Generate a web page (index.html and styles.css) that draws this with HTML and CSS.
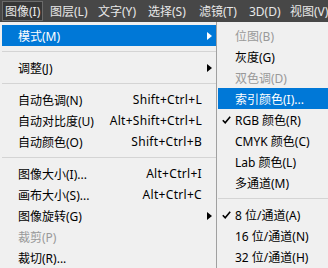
FILE: index.html
```html
<!DOCTYPE html>
<html lang="zh-CN">
<head>
  <meta charset="UTF-8">
  <title>图像菜单</title>
  <link rel="stylesheet" href="styles.css">
</head>
<body>
  <div class="bar">
    <span class="tab active">图像(I)</span>
    <span class="tab">图层(L)</span>
    <span class="tab">文字(Y)</span>
    <span class="tab">选择(S)</span>
    <span class="tab">滤镜(T)</span>
    <span class="tab">3D(D)</span>
    <span class="tab">视图(V)</span>
  </div>

  <div class="menus">
    <ul class="menu">
      <li class="item hot"><span class="label">模式(M)</span><span class="more"><i class="arrow"></i></span></li>
      <li class="sep"></li>
      <li class="item"><span class="label">调整(J)</span><span class="more"><i class="arrow"></i></span></li>
      <li class="sep"></li>
      <li class="item"><span class="label">自动色调(N)</span><span class="key">Shift+Ctrl+L</span><span class="more"></span></li>
      <li class="item"><span class="label">自动对比度(U)</span><span class="key">Alt+Shift+Ctrl+L</span><span class="more"></span></li>
      <li class="item"><span class="label">自动颜色(O)</span><span class="key">Shift+Ctrl+B</span><span class="more"></span></li>
      <li class="sep"></li>
      <li class="item"><span class="label">图像大小(I)...</span><span class="key">Alt+Ctrl+I</span><span class="more"></span></li>
      <li class="item"><span class="label">画布大小(S)...</span><span class="key">Alt+Ctrl+C</span><span class="more"></span></li>
      <li class="item"><span class="label">图像旋转(G)</span><span class="more"><i class="arrow"></i></span></li>
      <li class="item off"><span class="label">裁剪(P)</span><span class="more"></span></li>
      <li class="item"><span class="label">裁切(R)...</span><span class="more"></span></li>
    </ul>

    <ul class="menu sub">
      <li class="item off"><span class="mark"></span><span class="label">位图(B)</span></li>
      <li class="item"><span class="mark"></span><span class="label">灰度(G)</span></li>
      <li class="item off"><span class="mark"></span><span class="label">双色调(D)</span></li>
      <li class="item hot"><span class="mark"></span><span class="label">索引颜色(I)...</span></li>
      <li class="item"><span class="mark"><svg class="check" viewBox="0 0 9 8"><path d="M0.8 4.2 L3.2 6.8 L8.2 0.8" /></svg></span><span class="label">RGB 颜色(R)</span></li>
      <li class="item"><span class="mark"></span><span class="label">CMYK 颜色(C)</span></li>
      <li class="item"><span class="mark"></span><span class="label">Lab 颜色(L)</span></li>
      <li class="item"><span class="mark"></span><span class="label">多通道(M)</span></li>
      <li class="sep"></li>
      <li class="item"><span class="mark"><svg class="check" viewBox="0 0 9 8"><path d="M0.8 4.2 L3.2 6.8 L8.2 0.8" /></svg></span><span class="label">8 位/通道(A)</span></li>
      <li class="item"><span class="mark"></span><span class="label">16 位/通道(N)</span></li>
      <li class="item"><span class="mark"></span><span class="label">32 位/通道(H)</span></li>
    </ul>
  </div>
</body>
</html>
```

FILE: styles.css
```css
body {
  margin: 0;
  background: #f0f0f0;
  font-family: "Noto Sans", "Noto Sans CJK SC", sans-serif;
  font-size: 12px;
  color: #000;
  overflow: hidden;
}

/* top menu bar: columns follow the spacing of the Photoshop bar */
.bar {
  display: grid;
  grid-template-columns: 45px 48px 50px 51px 50px 41px 1fr;
  align-items: center;
  height: 22px;
  padding-left: 2px;
  background: #474747;
  color: #e8e8e8;
  white-space: nowrap;
  overflow: hidden;
}

.tab {
  display: flex;
  align-items: center;
  justify-self: start;
  height: 18px;
  padding: 0 2px;
  border: 1px solid transparent;
}

.tab.active {
  background: #363636;
  border-color: #6a6a6a;
}

.menus {
  display: flex;
}

.menu {
  list-style: none;
  margin: 0;
  padding: 3px 0 0 2px;
  width: 214px;
  background: #f0f0f0;
}

.sub {
  flex: 1;
  width: auto;
  border-left: 1px solid #a0a0a0;
  padding-left: 1px;
}

.item {
  display: flex;
  align-items: center;
  height: 21px;
  padding-left: 16px;
  white-space: nowrap;
}

.item.hot {
  background: #0078d7;
  color: #fff;
}

.item.off {
  color: #999;
}

.key {
  margin-left: auto;
  letter-spacing: 0.3px;
}

.more {
  display: flex;
  align-items: center;
  justify-content: center;
  width: 14px;
  margin-left: auto;
  flex-shrink: 0;
}

.key + .more {
  margin-left: 0;
}

.arrow {
  width: 0;
  height: 0;
  border-left: 5px solid #000;
  border-top: 4px solid transparent;
  border-bottom: 4px solid transparent;
}

.hot .arrow {
  border-left-color: #fff;
}

.sep {
  height: 11px;
  display: flex;
  align-items: center;
}

.sep::before {
  content: "";
  flex: 1;
  height: 1px;
  background: #d4d4d4;
}

.sub .item {
  padding-left: 0;
}

.mark {
  display: flex;
  align-items: center;
  width: 17px;
  padding-left: 4px;
  box-sizing: border-box;
}

.check {
  width: 9px;
  height: 8px;
  fill: none;
  stroke: #000;
  stroke-width: 1.6;
}
```
